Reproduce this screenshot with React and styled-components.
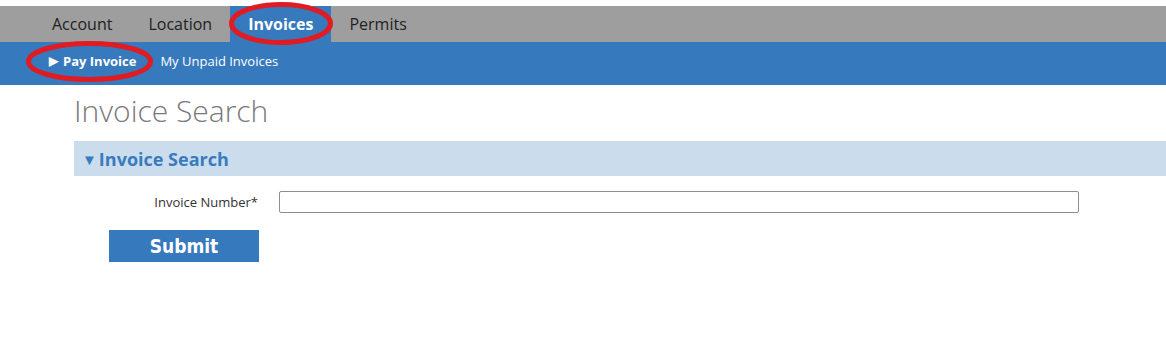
import React from "react";
import styled, { createGlobalStyle } from "styled-components";

const Global = createGlobalStyle`
  html, body { margin: 0; padding: 0; background: #fff; }
  body { font-family: "Open Sans", "Liberation Sans", sans-serif; }
  * { box-sizing: border-box; }
`;

const Page = styled.div`
  position: relative;
  width: 1166px;
  height: 361px;
  padding-top: 6px;
  overflow: hidden;
`;

const TopNav = styled.nav`
  display: flex;
  height: 36px;
  background: #9e9e9e;
  padding-left: 34px;
`;

const Tab = styled.a`
  display: flex;
  align-items: center;
  padding: 0 18px;
  font-size: 16px;
  font-weight: ${(p) => (p.$active ? 700 : 400)};
  color: ${(p) => (p.$active ? "#fff" : "#222")};
  background: ${(p) => (p.$active ? "#3679bc" : "transparent")};
  text-decoration: none;
`;

const SubNav = styled.nav`
  display: flex;
  align-items: center;
  height: 43px;
  background: #3679bc;
  padding-left: 49px;
  padding-bottom: 5px;
  gap: 24px;
`;

const SubLink = styled.a`
  display: flex;
  align-items: center;
  gap: 5px;
  font-size: 13px;
  color: #fff;
  font-weight: ${(p) => (p.$active ? 700 : 400)};
  text-decoration: none;
`;

const Arrow = styled.span`
  font-size: 12px;
  line-height: 1;
`;

const Main = styled.main`
  padding-left: 74px;
`;

const Title = styled.h1`
  margin: 0;
  padding-top: 5px;
  font-size: 30px;
  line-height: 41px;
  font-weight: 300;
  color: #7a7a7a;
`;

const Band = styled.div`
  margin-top: 10px;
  height: 35px;
  background: #cbdcec;
  display: flex;
  align-items: center;
  padding-left: 8px;
  gap: 2px;
  color: #3a7bbf;
  font-size: 18px;
  font-weight: 700;
`;

const Caret = styled.span`
  font-size: 15px;
`;

const FormRow = styled.div`
  display: flex;
  align-items: center;
  margin-top: 15px;
  height: 22px;
`;

const Label = styled.label`
  width: 184px;
  text-align: right;
  font-size: 13px;
  color: #333;
`;

const Input = styled.input`
  margin-left: 21px;
  width: 800px;
  height: 22px;
  border: 1px solid #8f8a9e;
  border-radius: 2px;
  padding: 2px 4px;
  font-size: 13px;
`;

const SubmitButton = styled.button`
  display: block;
  margin: 17px 0 0 35px;
  width: 150px;
  height: 32px;
  border: 0;
  background: #3679bc;
  color: #fff;
  font-family: "DejaVu Sans Condensed", "DejaVu Sans", Verdana, sans-serif;
  font-weight: 700;
  font-size: 19px;
  padding: 0;
`;

const Highlight = styled.svg`
  position: absolute;
  pointer-events: none;
  overflow: visible;
`;

function Ring({ left, top, w, h }) {
  return (
    <Highlight
      style={{ left, top, width: w, height: h }}
      viewBox={`0 0 ${w} ${h}`}
    >
      <ellipse
        cx={w / 2}
        cy={h / 2}
        rx={w / 2 - 2.5}
        ry={h / 2 - 2.5}
        fill="none"
        stroke="#e01b22"
        strokeWidth="5"
      />
    </Highlight>
  );
}

export default function App() {
  return (
    <Page>
      <Global />
      <TopNav>
        <Tab>Account</Tab>
        <Tab>Location</Tab>
        <Tab $active>Invoices</Tab>
        <Tab>Permits</Tab>
      </TopNav>
      <SubNav>
        <SubLink $active>
          <Arrow>▶</Arrow>Pay Invoice
        </SubLink>
        <SubLink>My Unpaid Invoices</SubLink>
      </SubNav>
      <Main>
        <Title>Invoice Search</Title>
        <Band>
          <Caret>▼</Caret>Invoice Search
        </Band>
        <FormRow>
          <Label>Invoice Number*</Label>
          <Input type="text" />
        </FormRow>
        <SubmitButton>Submit</SubmitButton>
      </Main>
      <Ring left={229} top={2} w={104} h={43} />
      <Ring left={26} top={41} w={127} h={41} />
    </Page>
  );
}
